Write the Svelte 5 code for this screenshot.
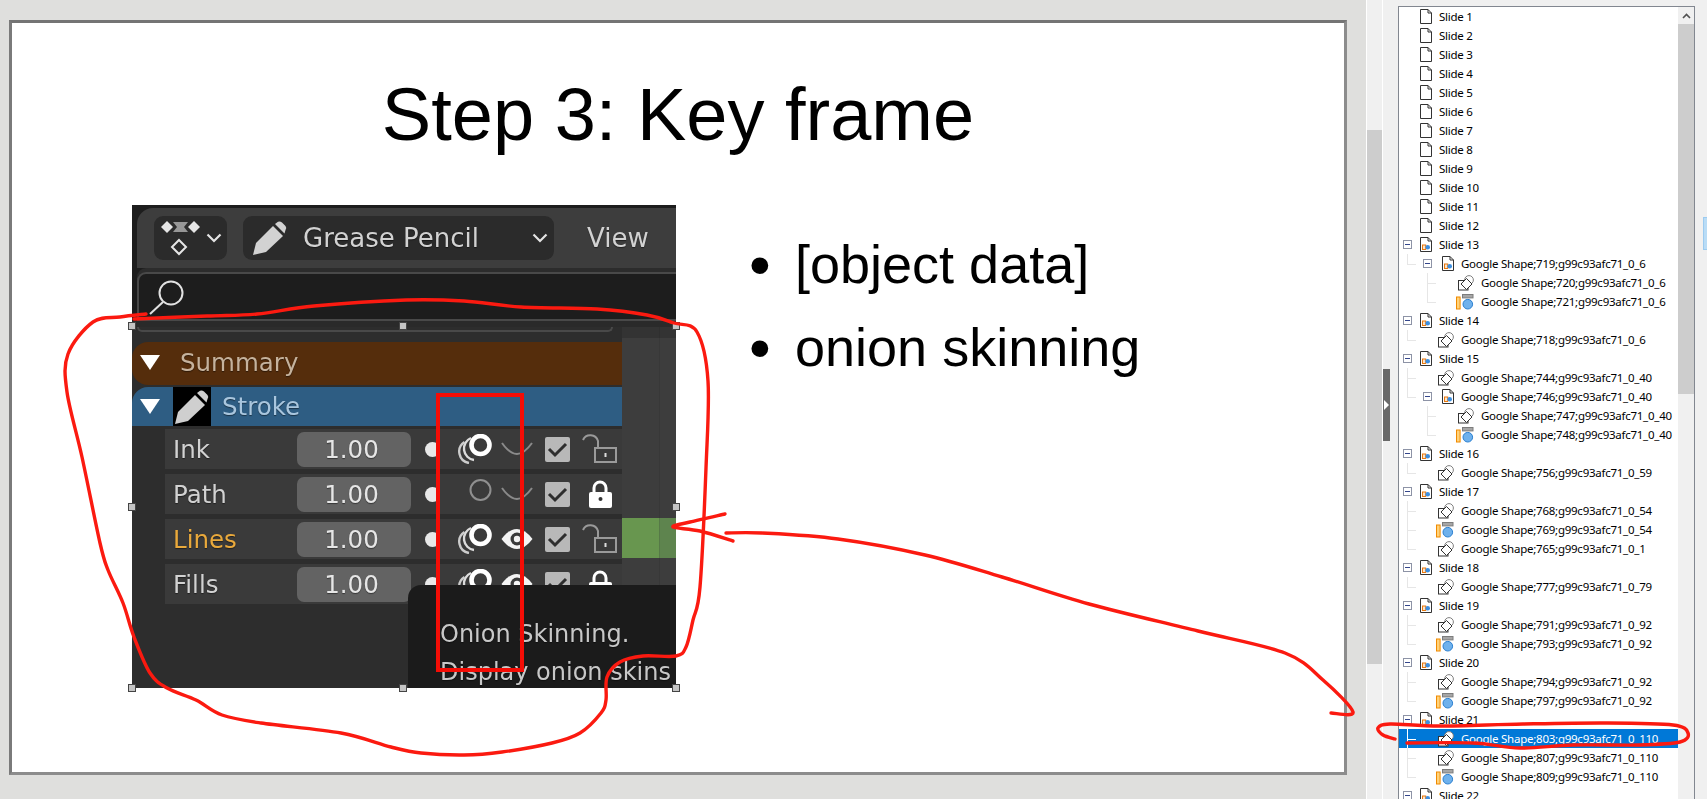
<script>
	// tree rows: l = label, k = icon kind, d = depth, x = has expander, last = last sibling
	const shape = (n, s) => `Google Shape;${n};g99c93afc71_0_${s}`;

	const rows = [];
	for (let i = 1; i <= 12; i++) rows.push({ l: `Slide ${i}`, k: 'doc', d: 0 });

	function slide(n, kids) {
		rows.push({ l: `Slide ${n}`, k: 'pdoc', d: 0, x: true });
		kids.forEach((c, i) => {
			const last = i === kids.length - 1;
			if (c.sub) {
				rows.push({ l: shape(c.n, c.s), k: 'pdoc', d: 1, x: true, last });
				c.sub.forEach((g, j) =>
					rows.push({ l: shape(g.n, g.s), k: g.k, d: 2, last: j === c.sub.length - 1 })
				);
			} else {
				rows.push({ l: shape(c.n, c.s), k: c.k, d: 1, last, sel: c.sel });
			}
		});
	}

	slide(13, [{ n: 719, s: 6, sub: [{ n: 720, s: 6, k: 'shape' }, { n: 721, s: 6, k: 'gfx' }] }]);
	slide(14, [{ n: 718, s: 6, k: 'shape' }]);
	slide(15, [
		{ n: 744, s: 40, k: 'shape' },
		{ n: 746, s: 40, sub: [{ n: 747, s: 40, k: 'shape' }, { n: 748, s: 40, k: 'gfx' }] }
	]);
	slide(16, [{ n: 756, s: 59, k: 'shape' }]);
	slide(17, [
		{ n: 768, s: 54, k: 'shape' },
		{ n: 769, s: 54, k: 'gfx' },
		{ n: 765, s: 1, k: 'shape' }
	]);
	slide(18, [{ n: 777, s: 79, k: 'shape' }]);
	slide(19, [{ n: 791, s: 92, k: 'shape' }, { n: 793, s: 92, k: 'gfx' }]);
	slide(20, [{ n: 794, s: 92, k: 'shape' }, { n: 797, s: 92, k: 'gfx' }]);
	slide(21, [
		{ n: 803, s: 110, k: 'shape', sel: true },
		{ n: 807, s: 110, k: 'shape' },
		{ n: 809, s: 110, k: 'gfx' }
	]);
	slide(22, []);

	const layers = [
		{ name: 'Ink', onion: true, eye: false, locked: false },
		{ name: 'Path', onion: false, eye: false, locked: true },
		{ name: 'Lines', onion: true, eye: true, locked: false, active: true },
		{ name: 'Fills', onion: true, eye: true, locked: true }
	];

	const handles = [
		[0, 121], [271, 121], [544, 121],
		[0, 302], [544, 302],
		[0, 483], [271, 483], [544, 483]
	];

	// smooth pen strokes through hand-read points
	function pen(p) {
		let d = `M${p[0][0]} ${p[0][1]}`;
		for (let i = 0; i < p.length - 1; i++) {
			const a = p[i - 1] || p[i], b = p[i], c = p[i + 1], e = p[i + 2] || c;
			d += ` C${b[0] + (c[0] - a[0]) / 6} ${b[1] + (c[1] - a[1]) / 6} ${c[0] - (e[0] - b[0]) / 6} ${c[1] - (e[1] - b[1]) / 6} ${c[0]} ${c[1]}`;
		}
		return d;
	}

	const strokes = [
		[[146,314],[120,317],[93,322],[68,354],[67,392],[82,457],[100,543],[108,570],[123,603],[134,637],[150,673],[167,688],[196,700],[222,715],[261,723],[341,733],[391,747],[421,753],[464,755],[502,752],[552,743],[580,733],[601,713],[606,700],[607,677],[620,662],[643,656],[676,656],[686,647],[693,620],[700,587],[706,468],[708,381],[697,332],[674,323],[647,315],[597,309],[521,307],[464,301],[406,300],[314,306],[257,314],[207,316],[134,319]],
		[[725,514],[690,522],[673,527],[700,531],[733,541]],
		[[726,533],[762,533],[838,539],[925,555],[1002,577],[1089,604],[1198,631],[1285,653],[1323,680],[1353,712],[1331,713]],
		[[1395,739],[1383,735],[1378,728],[1390,724],[1440,726],[1523,724],[1607,723],[1673,725],[1688,733],[1680,742],[1640,745],[1573,745],[1520,748],[1473,743],[1407,743]]
	];
</script>

{#snippet pencil(fill)}
	<path d="M0 34 L3 22 L20 5 L30 15 L13 31 Z" fill={fill} />
	<path d="M22 3 L25 0.8 Q27 0 29 1.5 L32.5 5 Q34 7 32.5 9 L31.5 12.5 Z" fill={fill} />
{/snippet}

{#snippet chevron()}
	<svg class="chev" width="16" height="10" viewBox="0 0 16 10"><path d="M1.5 1.5 L8 8 L14.5 1.5" fill="none" stroke="#e4e4e4" stroke-width="2.2" /></svg>
{/snippet}

{#snippet treeIcon(k)}
	{#if k === 'doc' || k === 'pdoc'}
		<svg width="12" height="15" viewBox="0 0 12 15">
			<path d="M.5 .5 H8 L11.5 4 V14.5 H.5 Z" fill="#fff" stroke="#333" />
			<path d="M8 .5 V4 H11.5" fill="none" stroke="#333" />
			{#if k === 'pdoc'}
				<rect x="2.5" y="8" width="3.2" height="4.5" fill="#fde3c8" stroke="#e9790e" />
				<circle cx="7.7" cy="10.3" r="2.3" fill="#3d8fe0" />
			{/if}
		</svg>
	{:else if k === 'shape'}
		<svg width="16" height="16" viewBox="0 0 16 16">
			<rect x=".5" y="5.5" width="9.5" height="9.5" fill="#fff" stroke="#333" />
			<circle cx="11" cy="5" r="4.4" fill="#fff" stroke="#808080" />
			<path d="M8.5 3.5 L14 9 L8.5 14.5 L3 9 Z" fill="#fff" stroke="#333" />
		</svg>
	{:else}
		<svg width="18" height="16" viewBox="0 0 18 16">
			<rect x=".5" y="3" width="3.6" height="12" fill="#ffd27a" stroke="#f08a00" />
			<rect x="6.5" y=".5" width="10.5" height="3.4" fill="#a6a6a6" stroke="#7c7c7c" />
			<circle cx="11.8" cy="10.2" r="4.8" fill="#6fb1ec" stroke="#2a7fd0" />
		</svg>
	{/if}
{/snippet}

<div class="app">
	<div class="workspace">
		<div class="slide">
			<h1>Step 3: Key frame</h1>
			<div class="slide-body">
				<div class="picture">
					<div class="blender">
						<div class="header">
							<div class="dropdown mode">
								<svg width="48" height="44" viewBox="0 0 48 44">
									<path d="M13 5 L19 11 L13 17 L7 11 Z" fill="#e6e6e6" />
									<path d="M40 5 L46 11 L40 17 L34 11 Z" fill="#e6e6e6" />
									<path d="M19 6 H34 L30 11 L34 16 H19 L23 11 Z" fill="#979797" />
									<path d="M25 24 L32 31 L25 38 L18 31 Z" fill="none" stroke="#e6e6e6" stroke-width="2" />
								</svg>
								{@render chevron()}
							</div>
							<div class="dropdown gp">
								<svg width="34" height="34" viewBox="0 0 34 34">{@render pencil('#d2d2d2')}</svg>
								<span class="gp-text">Grease Pencil</span>
								{@render chevron()}
							</div>
							<span class="view">View</span>
						</div>
						<div class="search">
							<svg width="42" height="44" viewBox="0 0 42 44">
								<circle cx="26" cy="18" r="11.5" fill="none" stroke="#e2e2e2" stroke-width="2" />
								<path d="M18 27 L5 39" stroke="#e2e2e2" stroke-width="2" />
							</svg>
						</div>
						<div class="search-band"></div>
						<div class="outliner">
							<div class="channels">
								<div class="search-tail"></div>
								<div class="chan summary">
									<i class="tri"></i><span>Summary</span>
								</div>
								<div class="chan stroke">
									<i class="tri"></i>
									<div class="gp-box">
										<svg width="34" height="34" viewBox="0 0 34 34">{@render pencil('#cfcfcf')}</svg>
									</div>
									<span>Stroke</span>
								</div>
								{#each layers as layer}
									<div class="layer">
										<span class="name" class:active={layer.active}>{layer.name}</span>
										<span class="slider">1.00</span>
										<i class="dot"></i>
										<svg class="ic-onion" width="35" height="30" viewBox="0 0 35 30">
											{#if layer.onion}
												<path d="M14 4 A11.5 11.5 0 0 0 17 26" fill="none" stroke="#dcdcdc" stroke-width="2.4" />
												<path d="M7.500 8 A11.500 11.500 0 0 0 12 29" fill="none" stroke="#cccccc" stroke-width="2.400" />
												<circle cx="23.500" cy="11" r="9" fill="#3a3a3a" stroke="#fff" stroke-width="4.600" />
											{:else}
												<circle cx="23.500" cy="11" r="10" fill="none" stroke="#8f8f8f" stroke-width="2" />
											{/if}
										</svg>
										{#if layer.eye}
											<svg class="ic-vis" width="32" height="20" viewBox="0 0 32 20">
												<path d="M.5 10 Q8 0 16 0 Q24 0 31.500 10 Q24 20 16 20 Q8 20 .5 10Z" fill="#f4f4f4" />
												<circle cx="16" cy="10" r="6.500" fill="#3a3a3a" />
												<circle cx="16" cy="10" r="3.200" fill="#f4f4f4" />
											</svg>
										{:else}
											<svg class="ic-vis" width="32" height="20" viewBox="0 0 32 20">
												<path d="M1 4 C6 11 11 15 16 15 C21 15 26 11 31 4" fill="none" stroke="#8a8a8a" stroke-width="2" />
											</svg>
										{/if}
										<svg class="ic-check" width="25" height="25" viewBox="0 0 25 25">
											<rect width="25" height="25" rx="2" fill="#b8b8b8" />
											<path d="M4 12 L10 18 L21 7" fill="none" stroke="#2e2e2e" stroke-width="3" />
										</svg>
										{#if layer.locked}
											<svg class="ic-lock" width="35" height="30" viewBox="0 0 35 30">
												<path d="M12 13 V9 A6 6 0 0 1 24 9 V13" fill="none" stroke="#fff" stroke-width="3" />
												<rect x="7" y="13" width="23" height="16" rx="2" fill="#fff" />
												<circle cx="18.500" cy="20" r="2" fill="#333" />
											</svg>
										{:else}
											<svg class="ic-lock" width="35" height="30" viewBox="0 0 35 30">
												<path d="M1 6 A8 8 0 0 1 16 7 V14" fill="none" stroke="#9a9a9a" stroke-width="2" />
												<rect x="13" y="14" width="21" height="14" fill="none" stroke="#9a9a9a" stroke-width="2" />
												<rect x="22.500" y="19" width="2" height="4" fill="#dcdcdc" />
											</svg>
										{/if}
									</div>
								{/each}
							</div>
							<div class="keys">
								<div class="key"></div>
							</div>
						</div>
						<div class="tooltip">
							<p>Onion Skinning.</p>
							<p>Display onion skins</p>
						</div>
					</div>
					<div class="red-box"></div>
					{#each handles as [hx, hy]}
						<i class="handle" style="left:{hx - 4}px;top:{hy - 4}px"></i>
					{/each}
				</div>
				<ul class="bullets">
					<li>[object data]</li>
					<li>onion skinning</li>
				</ul>
			</div>
		</div>
	</div>

	<div class="vscroll"><div class="vthumb"></div></div>

	<div class="side">
		<div class="grip"><svg width="7" height="12" viewBox="0 0 7 12"><path d="M1 1 L6 6 L1 11 Z" fill="#fff" /></svg></div>
		<div class="tree">
			<div class="tree-list">
				{#each rows as r}
					<div class="row d{r.d}" class:sel={r.sel}>
						{#if r.d > 0}
							<i class="g-v" class:half={r.last}></i>
							<i class="g-h"></i>
						{/if}
						{#if r.x}
							<i class="exp"></i>
						{/if}
						<div class="lead">{@render treeIcon(r.k)}</div>
						<span class="label">{r.l}</span>
					</div>
				{/each}
			</div>
			<div class="tree-scroll">
				<div class="tree-up">
					<svg width="9" height="6" viewBox="0 0 9 6"><path d="M1 5 L4.500 1.500 L8 5" fill="none" stroke="#505050" stroke-width="1.600" /></svg>
				</div>
				<div class="tree-thumb"></div>
			</div>
		</div>
		<div class="strip"><div class="strip-box"></div></div>
	</div>

	<svg class="ink" width="1707" height="799" viewBox="0 0 1707 799">
		{#each strokes as s}
			<path d={pen(s)} fill="none" stroke="#fb1a10" stroke-width="3.4" stroke-linecap="round" stroke-linejoin="round" />
		{/each}
	</svg>
</div>

<style>
	:global(body) {
		margin: 0;
		background: #dfdfdd;
	}

	.app {
		position: relative;
		display: flex;
		width: 1707px;
		height: 799px;
		overflow: hidden;
		background: #dfdfdd;
		font-family: 'Liberation Sans', sans-serif;
	}

	.workspace {
		width: 1366px;
		flex-shrink: 0;
		padding: 20px 19px 0 9px;
		box-sizing: border-box;
	}

	.slide {
		height: 755px;
		box-sizing: border-box;
		background: #fff;
		border: 3px solid #7f7f7f;
		border-color: #747474 #8c8c8c #8c8c8c #7a7a7a;
	}

	h1 {
		margin: 0;
		height: 182px;
		padding-top: 50px;
		box-sizing: border-box;
		font-size: 74px;
		font-weight: 400;
		line-height: 84px;
		text-align: center;
		color: #000;
	}

	.slide-body {
		display: flex;
		padding-left: 120px;
	}

	.picture {
		position: relative;
		width: 544px;
		height: 483px;
		flex-shrink: 0;
	}

	.blender {
		position: relative;
		display: flex;
		flex-direction: column;
		height: 100%;
		overflow: hidden;
		background: #1d1d1d;
		font-family: 'DejaVu Sans', sans-serif;
		font-size: 24.5px;
		color: #d2d2d2;
		text-shadow: 0 1px 1px rgba(0, 0, 0, 0.45);
		filter: blur(0.5px);
	}

	.header {
		display: flex;
		align-items: center;
		height: 60px;
		margin: 3px 0 0 5px;
		padding-left: 17px;
		flex-shrink: 0;
		background: #3d3d3d;
		border-top-left-radius: 16px;
	}

	.dropdown {
		display: flex;
		align-items: center;
		height: 44px;
		background: #2b2b2b;
		border-radius: 9px;
	}

	.mode {
		width: 73px;
		flex-shrink: 0;
	}

	.mode .chev {
		margin-left: 4px;
	}

	.gp {
		width: 311px;
		margin-left: 16px;
		padding-left: 10px;
		box-sizing: border-box;
		flex-shrink: 0;
	}

	.gp-text {
		margin-left: 16px;
		width: 229px;
		font-size: 26px;
	}

	.chev {
		flex-shrink: 0;
	}

	.view {
		margin-left: 33px;
		font-size: 26px;
	}

	.search {
		height: 49px;
		margin-left: 5px;
		padding-top: 1px;
		box-sizing: border-box;
		flex-shrink: 0;
		background: #1d1d1d;
		border: 2px solid #494949;
		border-right: 0;
		border-top-left-radius: 9px;
		box-shadow: 0 -4px 0 #2c2c2c;
		margin-top: 4px;
	}

	.search svg {
		display: block;
		margin-left: 6px;
	}

	.search-band {
		height: 6px;
		flex-shrink: 0;
		background: #2a2a2a;
	}

	.outliner {
		display: flex;
		flex: 1;
		min-height: 0;
	}

	.channels {
		width: 490px;
		flex-shrink: 0;
		background: #2d2d2d;
	}

	.search-tail {
		height: 5px;
		margin: 0 9px 0 5px;
		border: 2px solid #494949;
		border-top: 0;
		border-radius: 0 0 8px 8px;
		box-sizing: border-box;
	}

	.chan {
		display: flex;
		align-items: center;
	}

	.summary {
		height: 43px;
		margin-top: 10px;
		padding-bottom: 3px;
		box-sizing: border-box;
		background: #552d0c;
		border-radius: 16px 0 0 16px;
		color: #c5b29d;
	}

	.stroke {
		height: 39px;
		margin-top: 2px;
		background: #2e5d83;
		border-radius: 16px 0 0 0;
		color: #a9c6de;
	}

	.tri {
		width: 0;
		height: 0;
		margin-left: 8px;
		border-left: 10px solid transparent;
		border-right: 10px solid transparent;
		border-top: 15px solid #fff;
		flex-shrink: 0;
	}

	.summary span {
		margin-left: 20px;
	}

	.gp-box {
		display: flex;
		align-items: center;
		justify-content: center;
		width: 38px;
		height: 39px;
		margin-left: 13px;
		background: #000;
		flex-shrink: 0;
	}

	.stroke span {
		margin-left: 11px;
	}

	.layer {
		display: flex;
		align-items: center;
		height: 40px;
		margin: 5px 0 0 33px;
		padding-left: 8px;
		background: #3a3a3a;
	}

	.stroke + .layer {
		margin-top: 3px;
	}

	.name {
		width: 124px;
		flex-shrink: 0;
	}

	.name.active {
		color: #e9a93c;
	}

	.slider {
		width: 114px;
		height: 35px;
		padding-right: 5px;
		box-sizing: border-box;
		flex-shrink: 0;
		background: #636363;
		border-radius: 7px;
		line-height: 35px;
		text-align: center;
		color: #e6e6e6;
	}

	.dot {
		width: 15px;
		height: 15px;
		margin-left: 14px;
		border-radius: 50%;
		background: #e8e8e8;
		flex-shrink: 0;
	}

	.ic-onion {
		margin-left: 17px;
		flex-shrink: 0;
	}

	.ic-vis {
		margin-left: 9px;
		flex-shrink: 0;
	}

	.ic-check {
		margin-left: 12px;
		flex-shrink: 0;
	}

	.ic-lock {
		margin-left: 12px;
		flex-shrink: 0;
	}

	.keys {
		flex: 1;
		background: linear-gradient(#333 0 11px, #3d3d3d 11px);
		border-right: 0;
		position: relative;
	}

	.keys::after {
		content: '';
		position: absolute;
		left: 37px;
		top: 0;
		bottom: 0;
		width: 1px;
		background: rgba(0, 0, 0, 0.08);
	}

	.key {
		height: 40px;
		margin-top: 191px;
		background: linear-gradient(90deg, #68964f 0 37px, #5e844e 37px);
	}

	.tooltip {
		position: absolute;
		left: 276px;
		right: 0;
		top: 380px;
		bottom: 0;
		padding: 30px 0 0 32px;
		background: #1b1b1b;
		border-top-left-radius: 13px;
		white-space: nowrap;
		font-size: 24px;
		color: #c8c8c8;
	}

	.tooltip p {
		margin: 0;
		line-height: 38px;
	}

	.red-box {
		position: absolute;
		left: 304px;
		top: 188px;
		width: 88px;
		height: 279px;
		box-sizing: border-box;
		border: 4px solid #f40d06;
	}

	.handle {
		position: absolute;
		width: 8px;
		height: 8px;
		box-sizing: border-box;
		background: #c4c4c4;
		border: 1px solid #444;
	}

	.bullets {
		margin: 0 0 0 72px;
		padding: 18px 0 0 47px;
		font-size: 54px;
		line-height: 83px;
		color: #000;
		list-style: none;
	}

	.bullets li {
		position: relative;
	}

	.bullets li::before {
		content: '•';
		position: absolute;
		left: -46px;
		font-size: 62px;
	}

	.vscroll {
		width: 17px;
		flex-shrink: 0;
		box-sizing: border-box;
		background: #f0f0f0;
		border-left: 1px solid #fff;
		border-right: 1px solid #fff;
	}

	.vthumb {
		height: 534px;
		margin-top: 130px;
		background: #cdcdcd;
	}

	.side {
		display: flex;
		flex: 1;
		align-items: flex-start;
		height: 799px;
		background: #f0f0f0;
	}

	.grip {
		display: flex;
		align-items: center;
		width: 7px;
		height: 72px;
		margin-top: 369px;
		flex-shrink: 0;
		background: #696969;
	}

	.tree {
		display: flex;
		width: 297px;
		height: 793px;
		margin: 6px 0 0 8px;
		flex-shrink: 0;
		box-sizing: border-box;
		background: #fff;
		border: 1px solid #828790;
		border-bottom: 0;
		overflow: hidden;
	}

	.tree-list {
		width: 279px;
		flex-shrink: 0;
		font-family: 'Noto Sans', sans-serif;
		font-size: 11.5px;
		letter-spacing: -0.25px;
		color: #000;
	}

	.row {
		position: relative;
		display: flex;
		align-items: center;
		height: 19px;
		white-space: nowrap;
	}

	.row.sel {
		background: #0078d7;
		color: #fff;
	}

	.lead {
		display: flex;
		align-items: center;
		justify-content: flex-end;
		flex-shrink: 0;
	}

	.lead svg {
		display: block;
	}

	.d0 .lead {
		width: 33px;
	}

	.d1 .lead {
		width: 55px;
	}

	.d2 .lead {
		width: 75px;
	}

	.label {
		margin-left: 7px;
	}

	.exp {
		position: absolute;
		top: 5px;
		width: 9px;
		height: 9px;
		box-sizing: border-box;
		background: linear-gradient(#33468c, #33468c) center / 5px 1px no-repeat #fff;
		border: 1px solid #8d93a6;
	}

	.d0 .exp {
		left: 4px;
	}

	.d1 .exp {
		left: 24px;
	}

	.g-v,
	.g-h {
		position: absolute;
		background: #e6e6e6;
	}

	.sel .g-v,
	.sel .g-h {
		background: #fff;
	}

	.g-v {
		top: 0;
		bottom: 0;
		width: 1px;
	}

	.g-v.half {
		bottom: 9px;
	}

	.g-h {
		top: 10px;
		height: 1px;
		width: 9px;
	}

	.d1 .g-v,
	.d1 .g-h {
		left: 8px;
	}

	.d2 .g-v,
	.d2 .g-h {
		left: 28px;
	}

	.tree-scroll {
		flex: 1;
		background: #f0f0f0;
	}

	.tree-up {
		display: flex;
		align-items: center;
		justify-content: center;
		height: 17px;
	}

	.tree-thumb {
		height: 370px;
		background: #cdcdcd;
	}

	.strip {
		flex: 1;
		display: flex;
		justify-content: flex-end;
	}

	.strip-box {
		width: 4px;
		height: 33px;
		margin-top: 217px;
		box-sizing: border-box;
		background: #b9dcf6;
		border: 1px solid #9ccbf0;
		border-right: 0;
	}

	.ink {
		position: absolute;
		left: 0;
		top: 0;
		pointer-events: none;
	}
</style>
